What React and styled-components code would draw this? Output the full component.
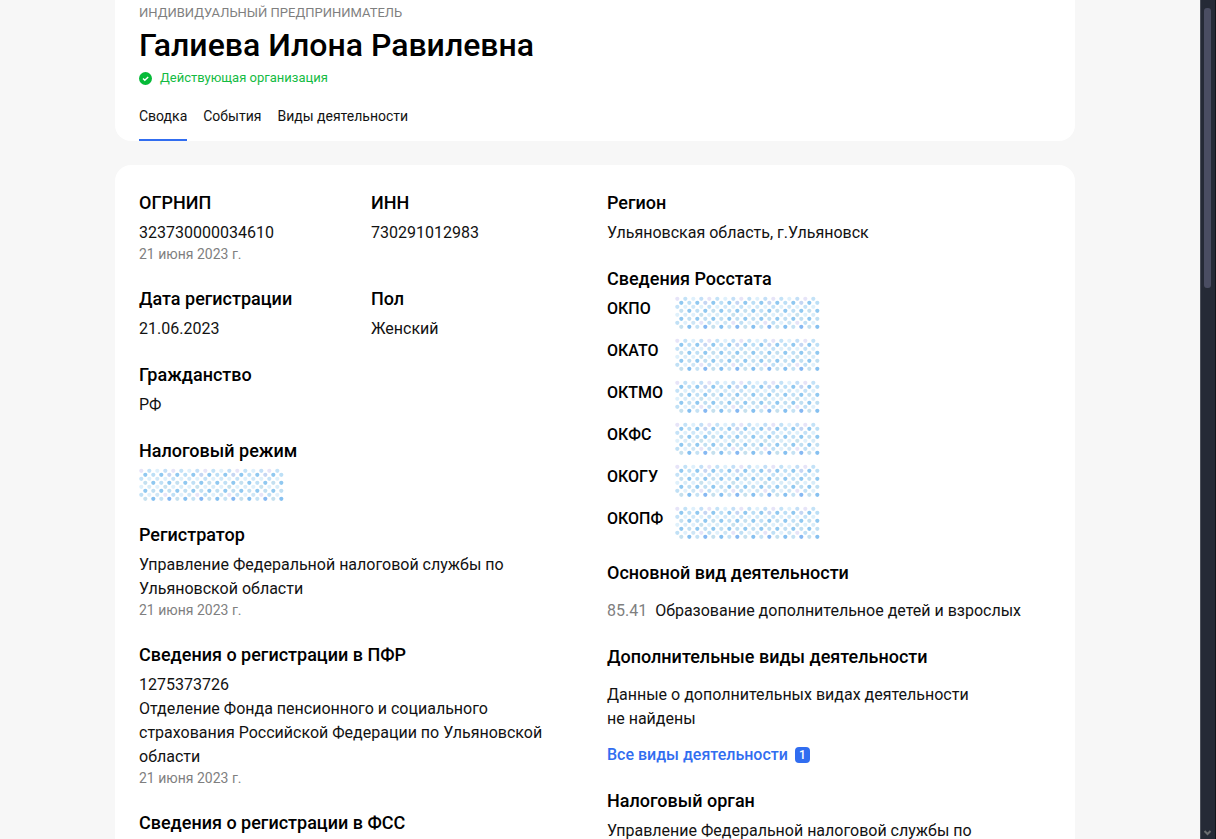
import React from 'react';
import styled, { createGlobalStyle } from 'styled-components';

const GlobalStyle = createGlobalStyle`
  * { box-sizing: border-box; }
  html, body, #root { height: 100%; }
  body {
    margin: 0;
    background: #f7f7f7;
    color: #121212;
    font-family: Roboto, "Liberation Sans", sans-serif;
    font-size: 16px;
    line-height: 24px;
    overflow: hidden;
  }
  h1, h2, p, dl, dd, dt { margin: 0; }
`;

const Shell = styled.div`
  display: flex;
  height: 100vh;
  overflow: hidden;
`;

const Viewport = styled.div`
  flex: 1;
  min-width: 0;
  overflow: hidden;
  padding-right: 10px;
`;

const Page = styled.div`
  max-width: 960px;
  margin: 0 auto;
  display: flex;
  flex-direction: column;
  gap: 24px;
`;

const Header = styled.header`
  background: #fff;
  border-radius: 0 0 16px 16px;
  padding: 4px 24px 0;
`;

const Kind = styled.p`
  color: #7f7f7f;
  font-size: 13px;
  line-height: 18px;
  text-transform: uppercase;
`;

const Title = styled.h1`
  color: #000;
  font-size: 32px;
  font-weight: 500;
  line-height: 40px;
  margin: 3px 0 4px;
`;

const Status = styled.p`
  display: flex;
  align-items: center;
  gap: 8px;
  color: #14bb43;
  font-size: 13px;
  line-height: 18px;
`;

const Tabs = styled.nav`
  display: flex;
  gap: 16px;
  margin-top: 17px;
`;

const Tab = styled.a`
  color: #121212;
  font-size: 14px;
  line-height: 24px;
  padding-bottom: 11px;
  border-bottom: 2px solid ${(p) => (p.$active ? '#316df0' : 'transparent')};
  text-decoration: none;
`;

const Card = styled.main`
  background: #fff;
  border-radius: 16px;
  padding: 26px 24px 24px;
  display: grid;
  grid-template-columns: 1fr 1fr;
  gap: 24px;
`;

const Column = styled.div`
  display: flex;
  flex-direction: column;
  gap: 22px;
  min-width: 0;
`;

const Pair = styled.div`
  display: grid;
  grid-template-columns: 1fr 1fr;
  gap: 20px;
`;

const Heading = styled.h2`
  color: #000;
  font-size: 18px;
  font-weight: 500;
  line-height: 24px;
  margin-bottom: ${(p) => (p.$wide ? 14 : 6)}px;
`;

const DateNote = styled.p`
  color: #7f7f7f;
  font-size: 14px;
  line-height: 18px;
  padding-bottom: 2px;
`;

const Codes = styled.dl`
  display: grid;
  grid-template-columns: 56px 1fr;
  gap: 10px 12px;

  dt { color: #000; font-weight: 500; }
  dd { height: 32px; }
`;

const Activity = styled.p`
  display: flex;
  gap: 8px;
`;

const Code = styled.span`
  color: #7f7f7f;
`;

const MoreLink = styled.a`
  display: flex;
  align-items: center;
  gap: 7px;
  width: fit-content;
  margin-top: 12px;
  color: #316df0;
  font-weight: 500;
  text-decoration: none;
`;

const Count = styled.span`
  background: #316df0;
  color: #fff;
  border-radius: 4px;
  font-size: 12px;
  line-height: 16px;
  width: 15px;
  text-align: center;
`;

const Dots = styled.svg`
  display: block;
  overflow: visible;
`;

const ScrollTrack = styled.div`
  display: flex;
  flex-direction: column;
  justify-content: space-between;
  align-items: center;
  width: 16px;
  padding: 8px 1px 2px 0;
  background: #252a36;
  border-left: 1px solid #4c505a;
  border-right: 1px solid #12141a;
`;

const ScrollThumb = styled.div`
  width: 7px;
  height: calc(100vh / 3);
  border-radius: 3px;
  background: #4a4d62;
`;

const DOT_ROWS = [
  ['#e6e4f8', '#c3e2f7', '#def0fc', '#c3dff7'],
  ['#90c8f0', '#bcdff6', '#90c8f0', '#c5d6f3'],
  ['#c4e2f7', '#def0fb', '#d0e8f8', '#def0fb'],
  ['#c4e0f0', '#90c8f0', '#c0e0f5', '#90c8f0'],
  ['#def0fb', '#d8ecf8', '#e0f0fb', '#c8e2ee'],
  ['#90c8f0', '#c0dff2', '#90c8f0', '#c0dff2'],
  ['#c0e0f5', '#e0f0fb', '#cfe6f5', '#e6e4f8'],
  ['#c5e0ee', '#86c0f0', '#c5e2f4', '#86b8f2'],
];

function HiddenValue() {
  const dots = [];
  DOT_ROWS.forEach((row, r) => {
    for (let i = 0; i < 18; i += 1) {
      dots.push(
        <circle key={`${r}-${i}`} cx={2.3 + i * 8 + (r % 2) * 4} cy={1.8 + r * 4} r="2.1" fill={row[i % 4]} />
      );
    }
  });
  return (
    <Dots width="146" height="32" viewBox="0 0 146 32" role="img" aria-label="Скрыто">
      {dots}
    </Dots>
  );
}

function Section({ title, wide, children }) {
  return (
    <section>
      <Heading $wide={wide}>{title}</Heading>
      {children}
    </section>
  );
}

const CODES = ['ОКПО', 'ОКАТО', 'ОКТМО', 'ОКФС', 'ОКОГУ', 'ОКОПФ'];

export default function App() {
  return (
    <Shell>
      <GlobalStyle />
      <Viewport>
        <Page>
          <Header>
            <Kind>Индивидуальный предприниматель</Kind>
            <Title>Галиева Илона Равилевна</Title>
            <Status>
              <svg width="13" height="14" viewBox="0 0 13 14" aria-hidden="true">
                <circle cx="6.5" cy="7.5" r="6.5" fill="#06ba38" />
                <path d="M4 7.6l1.8 1.7 3.4-3.3" fill="none" stroke="#fff" strokeWidth="1.4" />
              </svg>
              Действующая организация
            </Status>
            <Tabs>
              <Tab href="#summary" $active>Сводка</Tab>
              <Tab href="#events">События</Tab>
              <Tab href="#activities">Виды деятельности</Tab>
            </Tabs>
          </Header>
          <Card>
            <Column>
              <Pair>
                <Section title="ОГРНИП">
                  <p>323730000034610</p>
                  <DateNote>21 июня 2023 г.</DateNote>
                </Section>
                <Section title="ИНН"><p>730291012983</p></Section>
              </Pair>
              <Pair>
                <Section title="Дата регистрации"><p>21.06.2023</p></Section>
                <Section title="Пол"><p>Женский</p></Section>
              </Pair>
              <Section title="Гражданство"><p>РФ</p></Section>
              <Section title="Налоговый режим"><HiddenValue /></Section>
              <Section title="Регистратор">
                <p>Управление Федеральной налоговой службы по Ульяновской области</p>
                <DateNote>21 июня 2023 г.</DateNote>
              </Section>
              <Section title="Сведения о регистрации в ПФР">
                <p>1275373726</p>
                <p>Отделение Фонда пенсионного и социального страхования Российской Федерации по Ульяновской области</p>
                <DateNote>21 июня 2023 г.</DateNote>
              </Section>
              <Section title="Сведения о регистрации в ФСС" />
            </Column>
            <Column>
              <Section title="Регион"><p>Ульяновская область, г.Ульяновск</p></Section>
              <Section title="Сведения Росстата">
                <Codes>
                  {CODES.map((code) => (
                    <React.Fragment key={code}>
                      <dt>{code}</dt>
                      <dd><HiddenValue /></dd>
                    </React.Fragment>
                  ))}
                </Codes>
              </Section>
              <Section title="Основной вид деятельности" wide>
                <Activity>
                  <Code>85.41</Code>
                  <span>Образование дополнительное детей и взрослых</span>
                </Activity>
              </Section>
              <Section title="Дополнительные виды деятельности" wide>
                <p>Данные о дополнительных видах деятельности не&nbsp;найдены</p>
                <MoreLink href="#activities">
                  Все виды деятельности
                  <Count>1</Count>
                </MoreLink>
              </Section>
              <Section title="Налоговый орган">
                <p>Управление Федеральной налоговой службы по Ульяновской области</p>
              </Section>
            </Column>
          </Card>
        </Page>
      </Viewport>
      <ScrollTrack aria-hidden="true">
        <ScrollThumb />
        <svg width="9" height="8" viewBox="0 0 9 8">
          <path d="M1.5 2l3 3 3-3" fill="none" stroke="#6b6d70" strokeWidth="2" />
        </svg>
      </ScrollTrack>
    </Shell>
  );
}
